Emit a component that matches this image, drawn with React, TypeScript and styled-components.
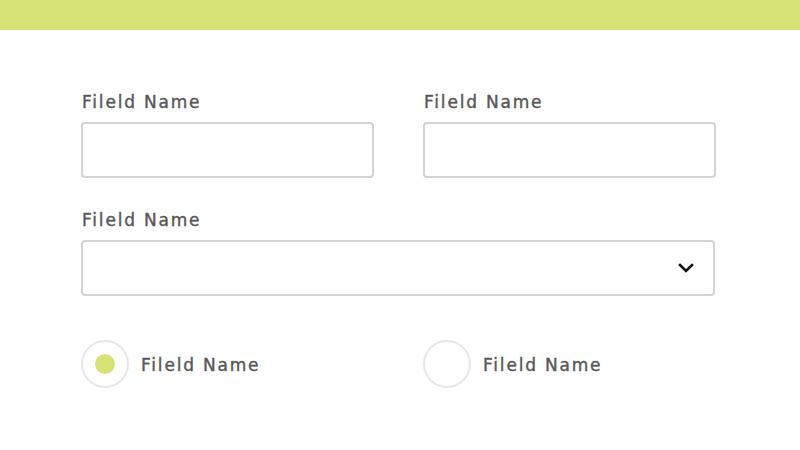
import React from "react";
import styled, { createGlobalStyle } from "styled-components";

const Global = createGlobalStyle`
  html, body { margin: 0; padding: 0; background: #ffffff; }
  body { font-family: "DejaVu Sans", "Liberation Sans", sans-serif; }
  * { box-sizing: border-box; }
`;

const Page = styled.div`
  width: 800px;
  height: 450px;
  background: #ffffff;
  display: flex;
  flex-direction: column;
`;

const TopBar = styled.div`
  height: 30px;
  background: #d7e276;
  flex: none;
`;

const Form = styled.form`
  width: 634px;
  margin: 62px 0 0 81px;
  display: flex;
  flex-direction: column;
  gap: 32px;
`;

const Row = styled.div`
  display: grid;
  grid-template-columns: 293px 293px;
  column-gap: 49px;
`;

const Field = styled.div`
  display: flex;
  flex-direction: column;
  gap: 10px;
`;

const textStyle = `
  font-family: "DejaVu Sans", sans-serif;
  font-size: 17px;
  line-height: 20px;
  font-weight: 400;
  -webkit-text-stroke: 0.4px #585858;
  color: #585858;
  letter-spacing: 1.8px;
  white-space: nowrap;
`;

const Label = styled.label`
  ${textStyle}
  padding-left: 1px;
`;

const Input = styled.input`
  height: 56px;
  width: 100%;
  border: 2px solid #d2d3d3;
  border-radius: 4px;
  outline: none;
  background: #fff;
`;

const SelectBox = styled.div`
  height: 56px;
  width: 100%;
  border: 2px solid #d2d3d3;
  border-radius: 4px;
  display: flex;
  align-items: center;
  justify-content: flex-end;
  padding-right: 19px;
`;

const RadioRow = styled.div`
  display: grid;
  grid-template-columns: 293px 293px;
  column-gap: 49px;
  margin-top: 12px;
`;

const RadioItem = styled.div`
  display: flex;
  align-items: center;
  gap: 12px;
`;

const RadioCircle = styled.span<{ $checked?: boolean }>`
  width: 48px;
  height: 48px;
  border-radius: 50%;
  border: 2px solid #e7e7e7;
  display: flex;
  align-items: center;
  justify-content: center;
  flex: none;
  &::after {
    content: "";
    width: 20px;
    height: 20px;
    border-radius: 50%;
    background: ${(p) => (p.$checked ? "#d7e276" : "transparent")};
  }
`;

const RadioLabel = styled.span`
  ${textStyle}
  padding-top: 2px;
`;

const Chevron = () => (
  <svg width="16" height="12" viewBox="0 0 16 12">
    <path d="M2 3 L8 9 L14 3" fill="none" stroke="#111" strokeWidth="2.6" strokeLinecap="square" />
  </svg>
);

export default function App() {
  return (
    <Page>
      <Global />
      <TopBar />
      <Form onSubmit={(e) => e.preventDefault()}>
        <Row>
          <Field>
            <Label>Fileld Name</Label>
            <Input />
          </Field>
          <Field>
            <Label>Fileld Name</Label>
            <Input />
          </Field>
        </Row>
        <Field>
          <Label>Fileld Name</Label>
          <SelectBox>
            <Chevron />
          </SelectBox>
        </Field>
        <RadioRow>
          <RadioItem>
            <RadioCircle $checked />
            <RadioLabel>Fileld Name</RadioLabel>
          </RadioItem>
          <RadioItem>
            <RadioCircle />
            <RadioLabel>Fileld Name</RadioLabel>
          </RadioItem>
        </RadioRow>
      </Form>
    </Page>
  );
}
